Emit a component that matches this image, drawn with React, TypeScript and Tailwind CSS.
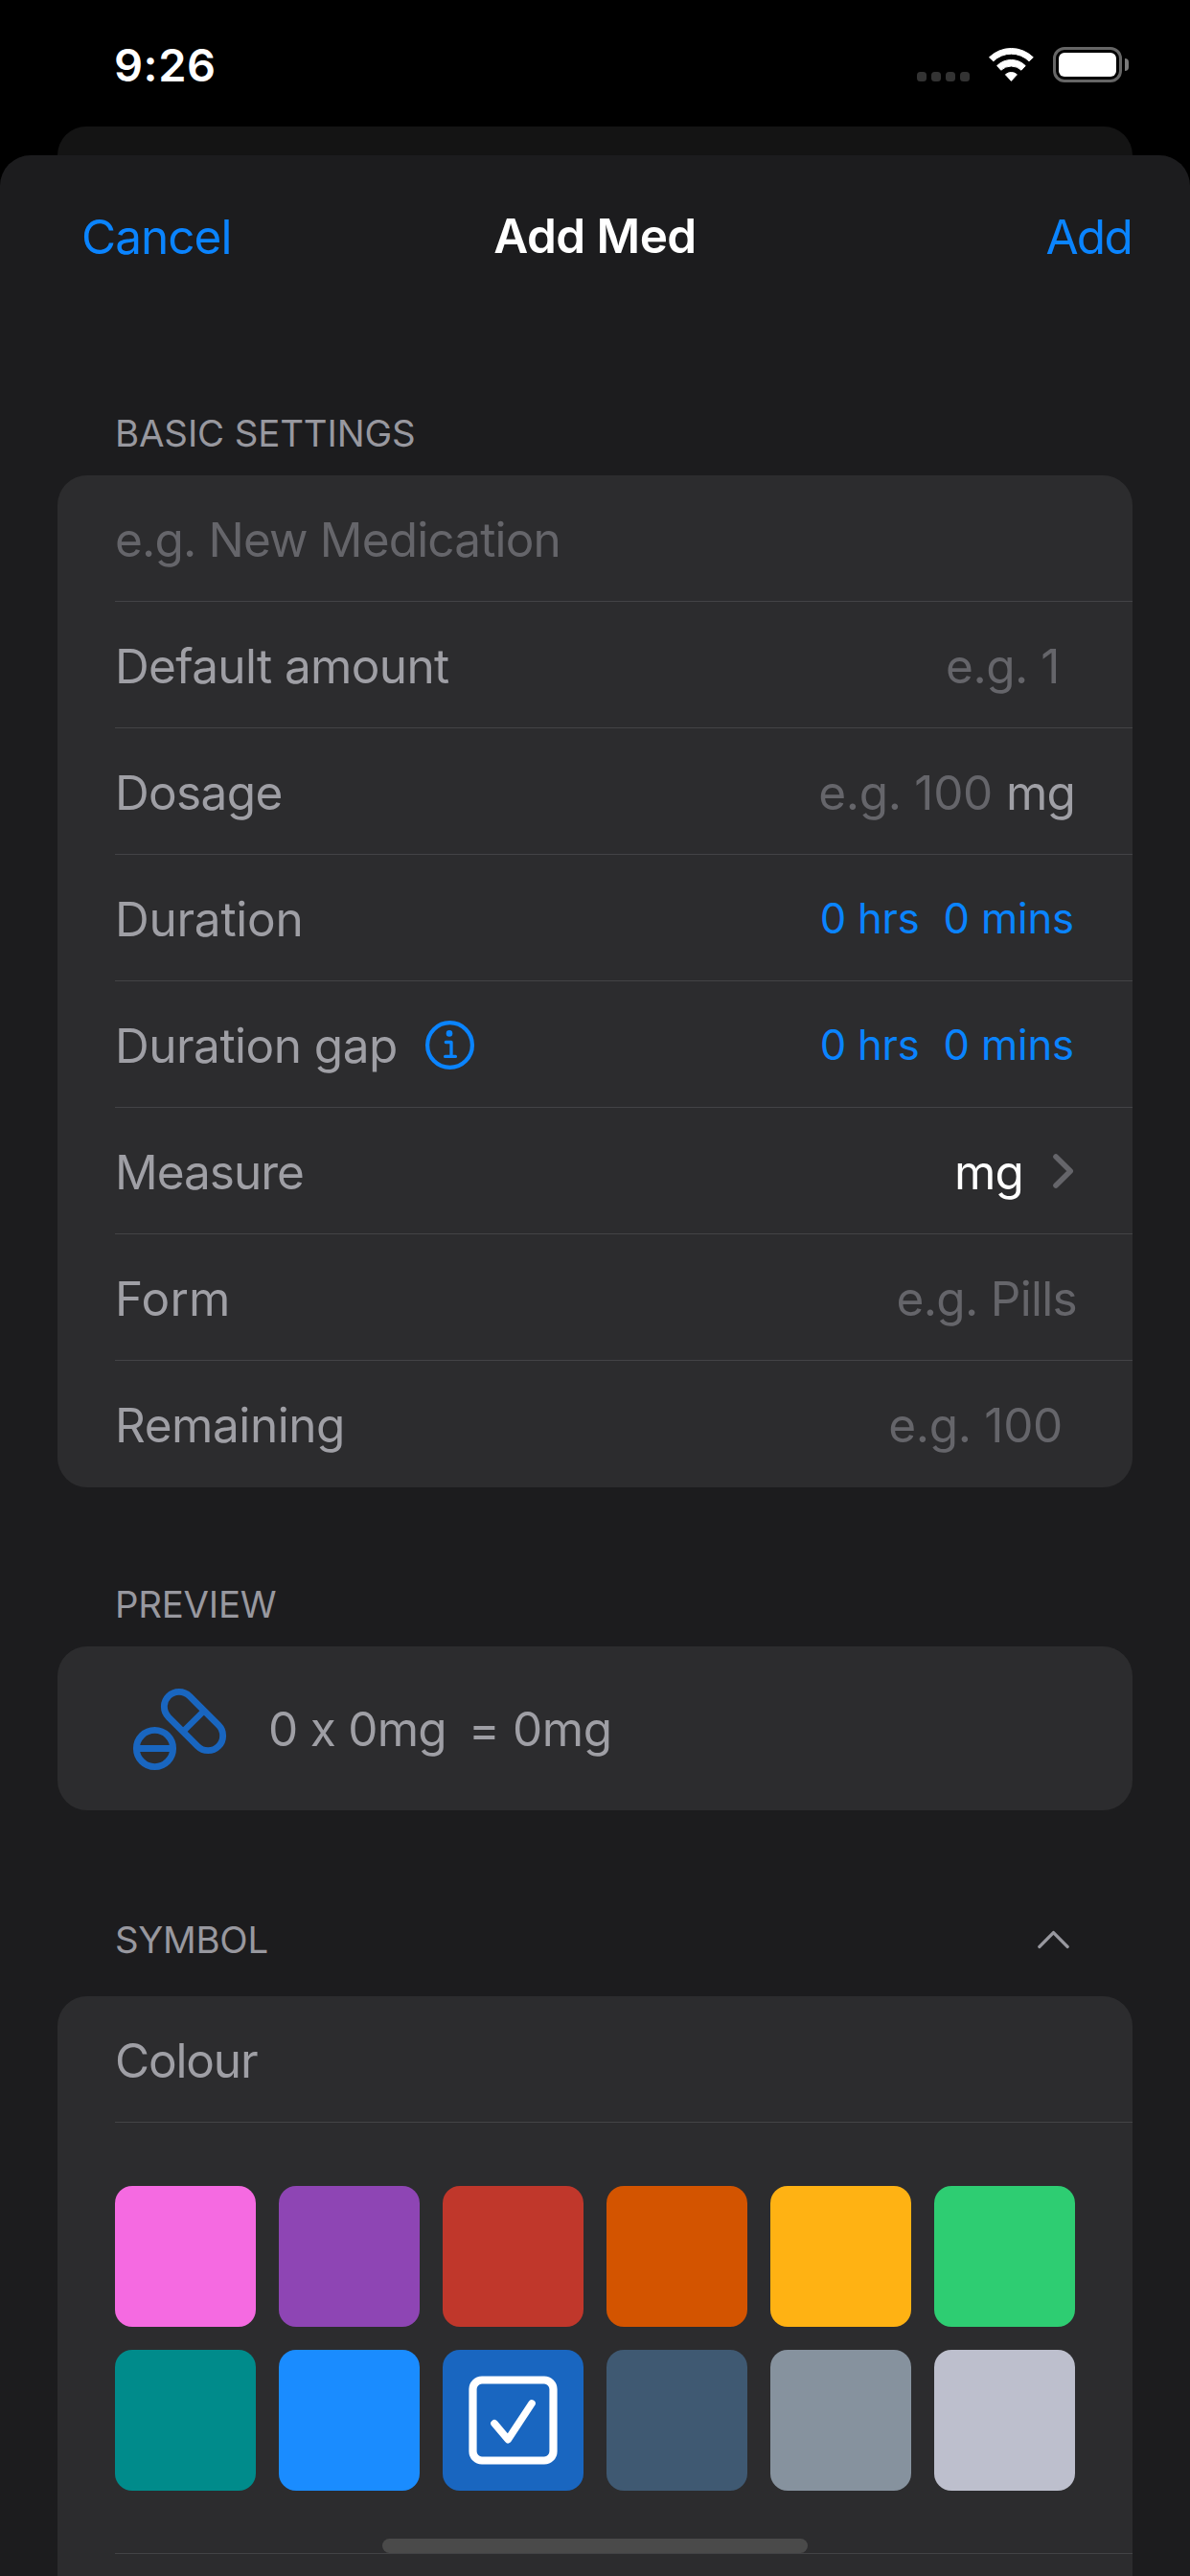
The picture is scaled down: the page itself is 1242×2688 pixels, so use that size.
import React from 'react';

type RowProps = { label: React.ReactNode; children?: React.ReactNode; last?: boolean };

function Row({ label, children, last = false }: RowProps) {
  return (
    <div
      className={`ml-[60px] flex h-[132px] items-center justify-between border-b pt-[3px] pr-[60px] leading-[60px] ${
        last ? 'border-transparent' : 'border-[#434346]'
      }`}
    >
      <div className="flex items-center">{label}</div>
      <div className="flex items-center">{children}</div>
    </div>
  );
}

function SectionHeader({ className, children }: { className: string; children: React.ReactNode }) {
  return (
    <div className={`flex items-end justify-between pr-[126px] pl-[120px] text-[38.4px] leading-[60px] text-[#98989f] ${className}`}>
      {children}
    </div>
  );
}

function DurationValue() {
  return (
    <div className="flex gap-[25px] pb-[1px] text-[43.6px] text-[#0a84ff]">
      <span className="tracking-[-0.29px]">0 hrs</span>
      <span className="mr-[1px] tracking-[-0.11px]">0 mins</span>
    </div>
  );
}

function WifiIcon() {
  return (
    <svg width="49" height="38" viewBox="0 0 49 38" fill="#fff" stroke="#fff" strokeWidth="1" strokeLinejoin="round">
      <path d="M1.5 11.8A32.8 32.8 0 0 1 47.3 11.8L43 15.8A26.6 26.6 0 0 0 5.8 15.8Z" />
      <path d="M9.6 20.6A20.9 20.9 0 0 1 39.2 20.6L35 25.2A15.5 15.5 0 0 0 13.8 25.2Z" />
      <path d="M18.4 29.8A9 9 0 0 1 30.4 29.8L24.4 36.4Z" />
    </svg>
  );
}

function InfoIcon() {
  return (
    <svg width="51" height="51" viewBox="0 0 51 51" fill="none" stroke="#0a84ff" className="mb-[1px] ml-[29px]">
      <circle cx="25.5" cy="25.5" r="23.4" strokeWidth="4.2" />
      <circle cx="25" cy="13.4" r="3.3" fill="#0a84ff" stroke="none" />
      <path d="M21.3 22.5H27V37.4M20.6 37.4H31.4" strokeWidth="3.3" strokeLinecap="round" strokeLinejoin="round" />
    </svg>
  );
}

function PillsIcon() {
  return (
    <svg width="99" height="87" viewBox="0 0 99 87" fill="none" stroke="#1966c0" strokeWidth="6.9">
      <circle cx="23.5" cy="63.5" r="19.1" />
      <path d="M5 63.5H42" />
      <g transform="translate(64 35) rotate(45)">
        <rect x="-36.9" y="-15.5" width="73.8" height="31" rx="15.5" />
        <path d="M0 -15V15" strokeWidth="6.4" />
      </g>
    </svg>
  );
}

const swatches = [
  'bg-[#f56ae1]',
  'bg-[#8e45b4]',
  'bg-[#c0372b]',
  'bg-[#d35400]',
  'bg-[#ffb213]',
  'bg-[#2ecd72]',
  'bg-[#008b8b]',
  'bg-[#1a8cff]',
  'bg-[#1966c0]',
  'bg-[#3f5972]',
  'bg-[#86929e]',
  'bg-[#bdbfcd]',
];
const selected = 8;

export default function App() {
  return (
    <div className="relative flex h-[2688px] w-[1242px] flex-col overflow-hidden bg-black font-['Inter','Liberation_Sans',sans-serif] text-[49.5px] whitespace-nowrap text-[#9f9fa5]">
      <div className="flex h-[132px] shrink-0 items-start justify-between pr-[64px] pl-[119px]">
        <span className="mt-[37px] text-[47px] leading-[61px] font-semibold tracking-[0.56px] text-white">9:26</span>
        <div className="mt-[48px] flex h-[38px] items-end">
          <div className="mb-[1px] flex gap-[5px]">
            {[0, 1, 2, 3].map((i) => (
              <span key={i} className="size-[10px] rounded-[3.5px] bg-[#333]" />
            ))}
          </div>
          <div className="mx-[19px]">
            <WifiIcon />
          </div>
          <div className="flex items-center gap-[3px]">
            <div className="h-[37px] w-[72px] rounded-[12px] border-[3px] border-[#666] p-[3px]">
              <div className="h-full w-full rounded-[6px] bg-white" />
            </div>
            <span className="h-[13px] w-[4px] rounded-r-[4px] bg-[#7a7a7a]" />
          </div>
        </div>
      </div>

      <div className="mx-[60px] h-[30px] shrink-0 rounded-t-[30px] bg-[#141414]" />

      <div className="flex flex-1 flex-col rounded-t-[32px] bg-[#1c1c1e]">
        <div className="grid h-[170px] shrink-0 grid-cols-3 items-center pr-[61px] pl-[85px] leading-[60px]">
          <span className="tracking-[-0.99px] text-[#0a84ff]">Cancel</span>
          <span className="-ml-[24px] pb-[2px] text-center font-semibold tracking-[-0.57px] text-white">Add Med</span>
          <span className="text-right tracking-[-1.73px] text-[#0a84ff]">Add</span>
        </div>

        <SectionHeader className="h-[164px] shrink-0 pb-[14px]">
          <span className="tracking-[-0.12px]">BASIC SETTINGS</span>
        </SectionHeader>
        <div className="mx-[60px] shrink-0 rounded-[31px] bg-[#2c2c2e]">
          <Row label={<span className="tracking-[-0.84px] text-[#65656a]">e.g. New Medication</span>} />
          <Row label={<span className="tracking-[-0.64px]">Default amount</span>}>
            <span className="mr-[16px] tracking-[-0.47px] text-[#65656a]">e.g. 1</span>
          </Row>
          <Row label={<span className="tracking-[-0.64px]">Dosage</span>}>
            <span className="mr-[14px] tracking-[-0.32px] text-[#65656a]">e.g. 100</span>
            <span className="tracking-[-0.86px]">mg</span>
          </Row>
          <Row label={<span className="tracking-[-0.26px]">Duration</span>}>
            <DurationValue />
          </Row>
          <Row
            label={
              <>
                <span className="tracking-[-0.51px]">Duration gap</span>
                <InfoIcon />
              </>
            }
          >
            <DurationValue />
          </Row>
          <Row label={<span className="tracking-[-1.01px]">Measure</span>}>
            <span className="mr-[31px] tracking-[-0.86px] text-white">mg</span>
            <svg width="22" height="36" viewBox="0 0 22 36" fill="none" stroke="#65656a" strokeWidth="5.6" strokeLinecap="round" strokeLinejoin="round" className="mr-[1px] mb-[2px]">
              <path d="M3 3L18.2 18L3 33" />
            </svg>
          </Row>
          <Row label={<span className="tracking-[0.22px]">Form</span>}>
            <span className="-mr-[2px] tracking-[-0.69px] text-[#65656a]">e.g. Pills</span>
          </Row>
          <Row last label={<span className="tracking-[-0.45px]">Remaining</span>}>
            <span className="mr-[13px] tracking-[-0.32px] text-[#65656a]">e.g. 100</span>
          </Row>
        </div>

        <SectionHeader className="h-[166px] shrink-0 pb-[14px]">
          <span className="tracking-[-0.23px]">PREVIEW</span>
        </SectionHeader>
        <div className="mx-[60px] flex h-[171px] shrink-0 items-center rounded-[31px] bg-[#2c2c2e] pt-[1px] pl-[78px] leading-[60px]">
          <PillsIcon />
          <span className="ml-[43px] tracking-[-0.73px]">0 x 0mg</span>
          <span className="ml-[23px] tracking-[-0.34px]">= 0mg</span>
        </div>

        <SectionHeader className="h-[194px] shrink-0 pb-[29px]">
          <span className="tracking-[-0.29px]">SYMBOL</span>
          <svg width="33" height="20" viewBox="0 0 33 20" fill="none" stroke="#98989f" strokeWidth="3.4" strokeLinecap="round" strokeLinejoin="round" className="mb-[20px]">
            <path d="M1.9 17.4L16.5 2.6L31.1 17.4" />
          </svg>
        </SectionHeader>
        <div className="mx-[60px] flex-1 rounded-t-[31px] bg-[#2c2c2e]">
          <Row label={<span className="tracking-[-1.16px]">Colour</span>} />
          <div className="ml-[60px] h-[450px] border-b border-[#434346] pt-[66px] pr-[60px]">
            <div className="grid grid-cols-6 gap-[24px]">
              {swatches.map((color, i) => (
                <div key={color} className={`flex size-[147px] items-center justify-center rounded-[18px] ${color}`}>
                  {i === selected && (
                    <svg width="93" height="93" viewBox="0 0 93 93" fill="none" stroke="#fff" strokeLinecap="round" strokeLinejoin="round">
                      <rect x="4.5" y="4.5" width="84" height="84" rx="9.5" strokeWidth="8.2" />
                      <path d="M27 49.8L41.2 66.6L66 29" strokeWidth="7.6" />
                    </svg>
                  )}
                </div>
              ))}
            </div>
          </div>
        </div>
      </div>

      <div className="absolute bottom-[24px] left-[399px] h-[15px] w-[444px] rounded-full bg-[#4a4a4a]" />
    </div>
  );
}
